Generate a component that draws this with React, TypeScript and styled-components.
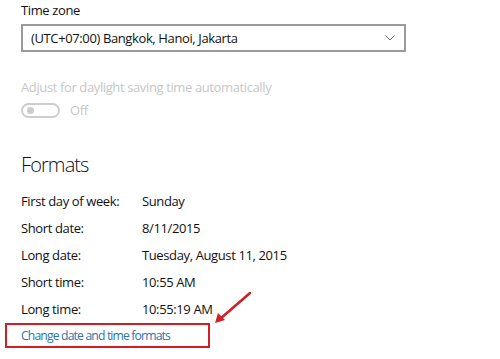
import React from "react";
import styled, { createGlobalStyle } from "styled-components";

const Global = createGlobalStyle`
  html, body { margin: 0; padding: 0; background: #fff; }
  body { font-family: "Open Sans", "Noto Sans", sans-serif; color: #111; letter-spacing: -0.38px; }
`;

const Page = styled.div`
  position: relative;
  width: 500px;
  height: 359px;
  overflow: hidden;
  padding: 0 0 0 21px;
  box-sizing: border-box;
`;

const Label = styled.div<{ $muted?: boolean }>`
  font-size: 13px;
  line-height: 20px;
  color: ${(p) => (p.$muted ? "#c6c6c6" : "#111")};
`;

const MutedLabel = styled(Label)`
  margin-top: 25px;
`;

const Select = styled.div`
  margin-top: 4px;
  width: 385px;
  height: 28px;
  box-sizing: border-box;
  border: 2px solid #9a9a9a;
  display: flex;
  align-items: center;
  justify-content: space-between;
  padding: 0 9px 0 8px;
  font-size: 13px;
  color: #111;
`;

const ToggleRow = styled.div`
  display: flex;
  align-items: center;
  gap: 10px;
  margin-top: 3px;
`;

const Toggle = styled.div`
  width: 39px;
  height: 15px;
  box-sizing: border-box;
  border: 2px solid #cdcdcd;
  border-radius: 8px;
  display: flex;
  align-items: center;
  padding-left: 4px;
`;

const Knob = styled.div`
  width: 7px;
  height: 7px;
  border-radius: 50%;
  background: #cdcdcd;
`;

const Heading = styled.div`
  margin-top: 32px;
  font-size: 20px;
  font-weight: 300;
  line-height: 26px;
  letter-spacing: -0.9px;
  color: #111;
`;

const Rows = styled.div`
  margin-top: 10px;
  display: grid;
  grid-template-columns: 121px auto;
`;

const Cell = styled.div`
  font-size: 13px;
  line-height: 27px;
  color: #111;
`;

const LinkBox = styled.div`
  margin-left: -16px;
  width: 205px;
  height: 25px;
  box-sizing: border-box;
  border: 2px solid #d21f26;
  display: flex;
  align-items: center;
  padding-left: 14px;
`;

const Link = styled.a`
  font-size: 12.2px;
  letter-spacing: -0.85px;
  color: #2d74b0;
  text-decoration: none;
  white-space: nowrap;
`;

const Arrow = styled.svg`
  position: absolute;
  left: 210px;
  top: 288px;
`;

const rows: [string, string][] = [
  ["First day of week:", "Sunday"],
  ["Short date:", "8/11/2015"],
  ["Long date:", "Tuesday, August 11, 2015"],
  ["Short time:", "10:55 AM"],
  ["Long time:", "10:55:19 AM"],
];

export default function App() {
  return (
    <Page>
      <Global />
      <Label>Time zone</Label>
      <Select>
        <span>(UTC+07:00) Bangkok, Hanoi, Jakarta</span>
        <svg width="10" height="6" viewBox="0 0 10 6">
          <path d="M0.5 0.5 L5 5 L9.5 0.5" fill="none" stroke="#666" strokeWidth="1" />
        </svg>
      </Select>
      <MutedLabel $muted>Adjust for daylight saving time automatically</MutedLabel>
      <ToggleRow>
        <Toggle>
          <Knob />
        </Toggle>
        <Label $muted>Off</Label>
      </ToggleRow>
      <Heading>Formats</Heading>
      <Rows>
        {rows.map(([k, v]) => (
          <React.Fragment key={k}>
            <Cell>{k}</Cell>
            <Cell>{v}</Cell>
          </React.Fragment>
        ))}
      </Rows>
      <LinkBox>
        <Link href="#">Change date and time formats</Link>
      </LinkBox>
      <Arrow width="45" height="40" viewBox="0 0 45 40">
        <line x1="40" y1="5" x2="10" y2="31" stroke="#d21f26" strokeWidth="2.5" strokeLinecap="round" />
        <path d="M5 35 L8 25 L15 32 Z" fill="#d21f26" />
      </Arrow>
    </Page>
  );
}
